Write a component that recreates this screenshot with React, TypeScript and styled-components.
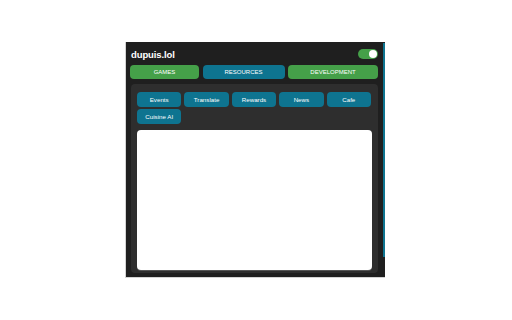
import React from "react";
import styled, { createGlobalStyle } from "styled-components";

const Global = createGlobalStyle`
  html, body { margin: 0; padding: 0; background: #ffffff; }
  body { font-family: "Liberation Sans", Arial, sans-serif; }
`;

const Page = styled.div`
  padding: 42px 0 0 125px;
`;

const Frame = styled.div`
  width: 259px;
  height: 235px;
  background: #1f1f1f;
  border-left: 1px solid #d4d4d4;
  border-bottom: 1px solid #d4d4d4;
  display: flex;
  position: relative;
`;

const Panel = styled.div`
  flex: 1;
  display: flex;
  flex-direction: column;
  padding: 0 7px 4px 4px;
  box-sizing: border-box;
`;

const ScrollThumb = styled.div`
  position: absolute;
  right: 0;
  top: 1px;
  width: 2px;
  height: 214px;
  background: #0e7490;
`;

const Header = styled.div`
  height: 23px;
  display: flex;
  align-items: center;
  justify-content: space-between;
  padding: 0 0 0 1px;
`;

const Title = styled.div`
  color: #ffffff;
  font-weight: bold;
  font-size: 9.5px;
  letter-spacing: -0.1px;
  padding-top: 1px;
`;

const Toggle = styled.div<{ $on: boolean }>`
  width: 20px;
  height: 10px;
  border-radius: 5px;
  background: ${(p) => (p.$on ? "#45a049" : "#777")};
  display: flex;
  align-items: center;
  justify-content: ${(p) => (p.$on ? "flex-end" : "flex-start")};
  padding: 0 1px;
  box-sizing: border-box;
  margin-top: 1px;
`;

const Knob = styled.div`
  width: 8px;
  height: 8px;
  border-radius: 50%;
  background: #ffffff;
`;

const Tabs = styled.div`
  display: grid;
  grid-template-columns: 69px 82px 90px;
  column-gap: 3.5px;
`;

const Tab = styled.div<{ $color: string }>`
  height: 14px;
  background: ${(p) => p.$color};
  border-radius: 4px;
  color: #ffffff;
  font-size: 6px;
  display: flex;
  align-items: center;
  justify-content: center;
  text-transform: uppercase;
`;

const Inner = styled.div`
  margin: 5px 0 0 1px;
  flex: 1;
  background: #2e2e2e;
  border-radius: 4px;
  padding: 8px 6px 3px 6px;
  display: flex;
  flex-direction: column;
  gap: 6px;
`;

const Buttons = styled.div`
  display: grid;
  grid-template-columns: repeat(5, 44.4px);
  column-gap: 3px;
  row-gap: 2px;
`;

const LinkButton = styled.div`
  height: 15px;
  background: #0e7490;
  border-radius: 4px;
  color: #ffffff;
  font-size: 6.2px;
  display: flex;
  align-items: center;
  justify-content: center;
`;

const Viewer = styled.div`
  flex: 1;
  background: #ffffff;
  border-radius: 4px;
  box-shadow: 0 1px 0 #555;
`;

const tabs = [
  { label: "Games", color: "#45a049" },
  { label: "Resources", color: "#0e7490" },
  { label: "Development", color: "#45a049" },
];

const links = ["Events", "Translate", "Rewards", "News", "Cafe", "Cuisine AI"];

export default function App() {
  return (
    <>
      <Global />
      <Page>
        <Frame>
          <Panel>
            <Header>
              <Title>dupuis.lol</Title>
              <Toggle $on>
                <Knob />
              </Toggle>
            </Header>
            <Tabs>
              {tabs.map((t) => (
                <Tab key={t.label} $color={t.color}>
                  {t.label}
                </Tab>
              ))}
            </Tabs>
            <Inner>
              <Buttons>
                {links.map((l) => (
                  <LinkButton key={l}>{l}</LinkButton>
                ))}
              </Buttons>
              <Viewer />
            </Inner>
          </Panel>
          <ScrollThumb />
        </Frame>
      </Page>
    </>
  );
}
